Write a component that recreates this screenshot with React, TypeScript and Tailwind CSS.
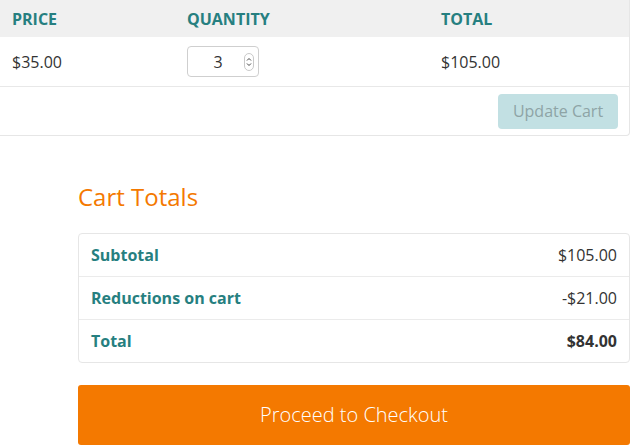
import React from "react";

export default function App() {
  const font = { fontFamily: '"Open Sans", "Noto Sans", sans-serif' };
  return (
    <div className="w-[630px] h-[445px] overflow-hidden bg-white" style={font}>
      <div className="w-[630px] border-r border-b border-[#e6e6e6] rounded-br-[4px]">
        <div className="grid grid-cols-[175px_254px_1fr] h-[37px] items-center bg-[#f0f0f0] text-[16px] font-bold text-[#267f80] uppercase">
          <div className="pl-[12px]">Price</div>
          <div className="pl-[12px]">Quantity</div>
          <div className="pl-[12px]">Total</div>
        </div>
        <div className="grid grid-cols-[175px_254px_1fr] h-[50px] items-center border-b border-[#e8e8e8] text-[16px] text-[#333]">
          <div className="pl-[12px]">$35.00</div>
          <div className="pl-[12px]">
            <div className="w-[72px] h-[31px] border border-[#cfcfcf] rounded-[4px] flex items-center">
              <span className="flex-1 text-center pl-[4px] text-[16px] text-[#333]">3</span>
              <span className="w-[10px] h-[18px] mr-[4px] border border-[#c9c9c9] rounded-[5px] flex flex-col items-center justify-center">
                <svg width="6" height="12" viewBox="0 0 6 12">
                  <path d="M1 4.5 L3 2.5 L5 4.5" fill="none" stroke="#444" strokeWidth="1" />
                  <path d="M1 7.5 L3 9.5 L5 7.5" fill="none" stroke="#444" strokeWidth="1" />
                </svg>
              </span>
            </div>
          </div>
          <div className="pl-[12px]">$105.00</div>
        </div>
        <div className="h-[48px] flex items-center justify-end pr-[11px]">
          <button className="w-[120px] h-[35px] bg-[#c2e0e3] rounded-[4px] text-[16px] text-[#8ea4a6]">
            Update Cart
          </button>
        </div>
      </div>
      <div className="pl-[78px] pr-[0px]">
        <h2 className="mt-[45px] text-[24px] leading-[32px] text-[#f47900]">Cart Totals</h2>
        <div className="mt-[20px] border border-[#e6e6e6] rounded-[4px] text-[16px]">
          <div className="h-[43px] flex items-center justify-between px-[12px] border-b border-[#ebebeb]">
            <span className="font-bold text-[#267f80]">Subtotal</span>
            <span className="text-[#333]">$105.00</span>
          </div>
          <div className="h-[43px] flex items-center justify-between px-[12px] border-b border-[#ebebeb]">
            <span className="font-bold text-[#267f80]">Reductions on cart</span>
            <span className="text-[#333]">-$21.00</span>
          </div>
          <div className="h-[42px] flex items-center justify-between px-[12px]">
            <span className="font-bold text-[#267f80]">Total</span>
            <span className="font-bold text-[#333]">$84.00</span>
          </div>
        </div>
        <button className="mt-[22px] w-full h-[60px] bg-[#f47900] rounded-[3px] text-white text-[20px] font-light">
          Proceed to Checkout
        </button>
      </div>
    </div>
  );
}
